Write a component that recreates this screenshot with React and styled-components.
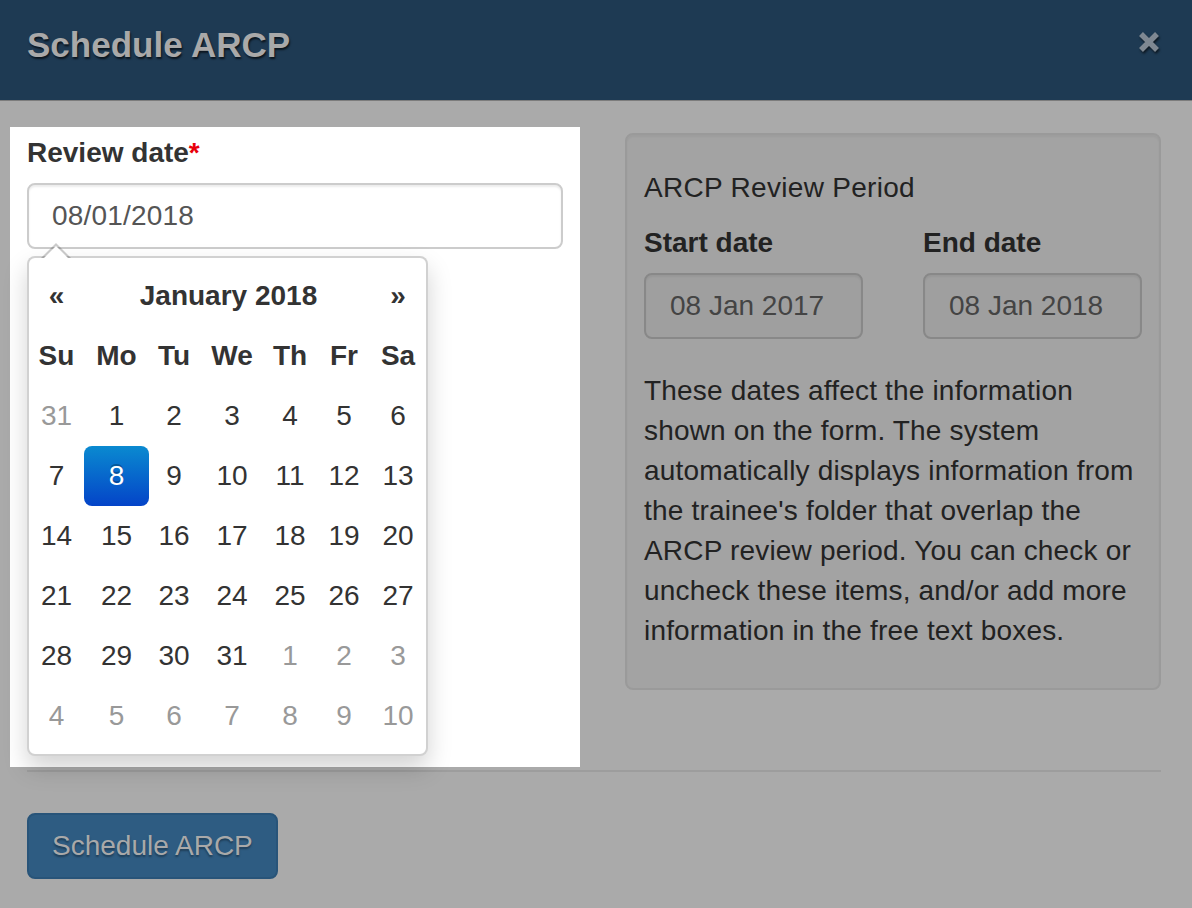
import React from "react";
import styled, { createGlobalStyle } from "styled-components";

const Global = createGlobalStyle`
  html, body { margin: 0; padding: 0; background: #aaaaaa; }
  body { font-family: "Liberation Sans", Arial, Helvetica, sans-serif; }
  * { box-sizing: border-box; }
`;

const Page = styled.div`
  width: 1192px;
  min-height: 908px;
  background: #aaaaaa;
  color: #222;
  font-size: 28px;
  line-height: 40px;
`;

const Header = styled.header`
  height: 101px;
  background: #1e3a53;
  border-bottom: 1px solid #7c7c7c;
  display: flex;
  align-items: center;
  justify-content: space-between;
  padding: 0 32px 12px 27px;
`;

const Title = styled.h4`
  margin: 0;
  font-size: 35px;
  line-height: 1;
  font-weight: 700;
  color: #a9a9a9;
  text-shadow: 1px 2px 2px rgba(0, 0, 0, 0.65);
`;

const Close = styled.button`
  border: 0;
  background: none;
  padding: 0;
  margin-bottom: 5px;
  width: 22px;
  height: 22px;
  display: flex;
  filter: drop-shadow(1px 2px 1px rgba(0, 0, 0, 0.6));
`;

const Body = styled.main`
  padding: 32px 31px 0 27px;
`;

const Row = styled.div`
  display: grid;
  grid-template-columns: 536px 536px;
  column-gap: 62px;
  align-items: start;
`;

const Highlight = styled.section`
  margin: -6px -17px 0;
  padding: 6px 17px;
  height: 640px;
  background: #ffffff;
`;

const Label = styled.label`
  display: block;
  font-weight: 700;
  color: ${(p) => (p.$dim ? "#222" : "#333")};
  margin-bottom: 10px;
  line-height: 40px;
`;

const Req = styled.span`
  color: #e8000b;
`;

const InputWrap = styled.div`
  position: relative;
`;

const TextInput = styled.input`
  display: block;
  width: 100%;
  height: 66px;
  border: 2px solid #cccccc;
  border-radius: 8px;
  padding: 0 23px;
  font: 28px "Liberation Sans", Arial, sans-serif;
  letter-spacing: 0.2px;
  color: #555;
  background: #fff;
  box-shadow: inset 0 2px 2px rgba(0, 0, 0, 0.075);
  outline: none;
`;

const Dropdown = styled.div`
  position: absolute;
  top: calc(100% + 7px);
  left: 0;
  width: 401px;
  padding: 8px 0;
  background: #fff;
  border: 2px solid rgba(0, 0, 0, 0.18);
  border-radius: 8px;
  box-shadow: 0 12px 24px rgba(0, 0, 0, 0.175);
  z-index: 2;

  &::before {
    content: "";
    position: absolute;
    top: -15px;
    left: 12px;
    border-left: 15px solid transparent;
    border-right: 15px solid transparent;
    border-bottom: 15px solid rgba(0, 0, 0, 0.2);
  }
  &::after {
    content: "";
    position: absolute;
    top: -12px;
    left: 14px;
    border-left: 13px solid transparent;
    border-right: 13px solid transparent;
    border-bottom: 13px solid #fff;
  }
`;

const CalGrid = styled.div`
  display: grid;
  grid-template-columns: 55px 65px 50px 66px 50px 58px 50px;
  grid-auto-rows: 60px;
`;

const Cell = styled.div`
  display: flex;
  align-items: center;
  justify-content: center;
  font-weight: ${(p) => (p.$bold ? 700 : 400)};
  color: ${(p) => (p.$muted ? "#999" : p.$active ? "#fff" : "#333")};
  grid-column: ${(p) => p.$span || "auto"};
  border-radius: 8px;
  background: ${(p) =>
    p.$active ? "linear-gradient(to bottom, #0a8ad0, #0444c8)" : "transparent"};
  text-shadow: ${(p) => (p.$active ? "0 -2px 0 rgba(0,0,0,0.25)" : "none")};
`;

const Well = styled.aside`
  background: #a3a3a3;
  border: 2px solid #9a9a9a;
  border-radius: 8px;
  padding: 17px;
  box-shadow: inset 0 2px 2px rgba(0, 0, 0, 0.04);
`;

const WellTitle = styled.h5`
  margin: 20px 0;
  font-size: 28px;
  line-height: 31px;
  font-weight: 400;
  letter-spacing: 0.3px;
  color: #222;
`;

const Fields = styled.div`
  display: grid;
  grid-template-columns: 1fr 1fr;
  column-gap: 60px;
  margin-bottom: 32px;
`;

const ReadBox = styled.div`
  height: 66px;
  border: 2px solid #888;
  border-radius: 8px;
  background: #9f9f9f;
  padding: 0 24px;
  display: flex;
  align-items: center;
  color: #444;
  box-shadow: inset 0 2px 2px rgba(0, 0, 0, 0.05);
`;

const Para = styled.p`
  margin: 0 0 20px;
  letter-spacing: 0.18px;
  color: #222;
`;

const Rule = styled.hr`
  margin: 3px 0 0;
  border: 0;
  border-top: 2px solid #9d9d9d;
`;

const PrimaryButton = styled.button`
  margin-top: 41px;
  height: 66px;
  padding: 0 23px;
  background: #2e5c82;
  border: 2px solid #285479;
  border-radius: 8px;
  font: 28px "Liberation Sans", Arial, sans-serif;
  color: #a9a9a9;
  text-shadow: 0 2px 2px rgba(0, 0, 0, 0.35);
`;

const DOW = ["Su", "Mo", "Tu", "We", "Th", "Fr", "Sa"];

const weeks = [
  [[31, 1], [1], [2], [3], [4], [5], [6]],
  [[7], [8, 0, 1], [9], [10], [11], [12], [13]],
  [[14], [15], [16], [17], [18], [19], [20]],
  [[21], [22], [23], [24], [25], [26], [27]],
  [[28], [29], [30], [31], [1, 1], [2, 1], [3, 1]],
  [[4, 1], [5, 1], [6, 1], [7, 1], [8, 1], [9, 1], [10, 1]],
];

export default function App() {
  return (
    <Page>
      <Global />
      <Header>
        <Title>Schedule ARCP</Title>
        <Close aria-label="Close">
          <svg width="22" height="22" viewBox="0 0 22 22">
            <path
              d="M3 3 L19 19 M19 3 L3 19"
              stroke="#7f8892"
              strokeWidth="5.5"
              fill="none"
            />
          </svg>
        </Close>
      </Header>
      <Body>
        <Row>
          <Highlight>
            <Label>
              Review date<Req>*</Req>
            </Label>
            <InputWrap>
              <TextInput readOnly value="08/01/2018" />
              <Dropdown>
                <CalGrid>
                  <Cell $bold>«</Cell>
                  <Cell $bold $span="span 5">January 2018</Cell>
                  <Cell $bold>»</Cell>
                  {DOW.map((d) => (
                    <Cell key={d} $bold>
                      {d}
                    </Cell>
                  ))}
                  {weeks.flat().map(([n, muted, active], i) => (
                    <Cell key={i} $muted={muted === 1} $active={active === 1}>
                      {n}
                    </Cell>
                  ))}
                </CalGrid>
              </Dropdown>
            </InputWrap>
          </Highlight>
          <Well>
            <WellTitle>ARCP Review Period</WellTitle>
            <Fields>
              <div>
                <Label $dim>Start date</Label>
                <ReadBox>08 Jan 2017</ReadBox>
              </div>
              <div>
                <Label $dim>End date</Label>
                <ReadBox>08 Jan 2018</ReadBox>
              </div>
            </Fields>
            <Para>
              These dates affect the information shown on the form. The system
              automatically displays information from the trainee's folder that
              overlap the ARCP review period. You can check or uncheck these
              items, and/or add more information in the free text boxes.
            </Para>
          </Well>
        </Row>
        <Rule />
        <PrimaryButton>Schedule ARCP</PrimaryButton>
      </Body>
    </Page>
  );
}
